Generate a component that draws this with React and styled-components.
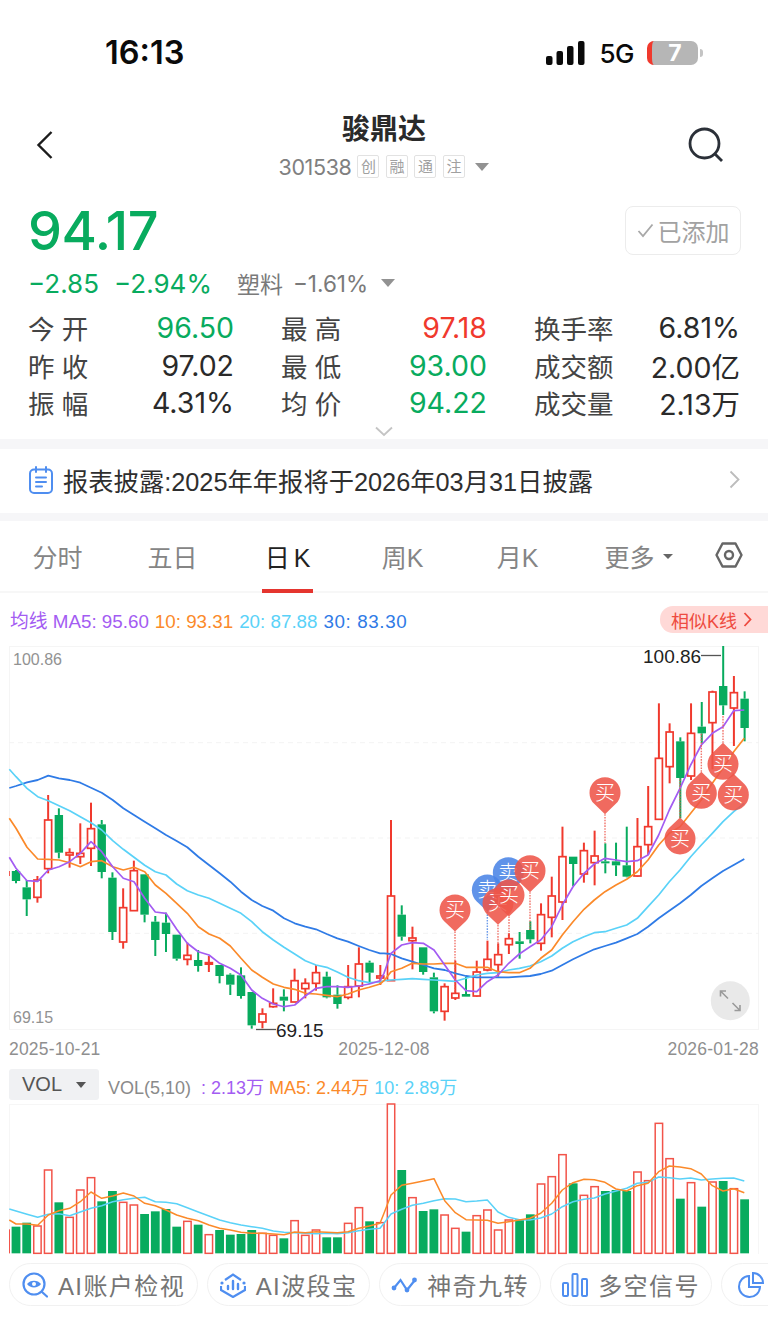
import React from 'react';
import styled, { createGlobalStyle } from 'styled-components';

const GREEN = '#08AB5E';
const RED = '#F0392D';
const BLUE = '#4F8EF0';
const PURPLE = '#A35CF2';
const ORANGE = '#FB8A2A';
const CYAN = '#5AD2F8';
const DEEP_BLUE = '#2F7BE6';
const DIGITS = "'Inter', 'Noto Sans CJK SC', sans-serif";

const Global = createGlobalStyle`
  html, body {
    margin: 0;
    padding: 0;
    background: #fff;
  }
  body {
    font-family: 'Liberation Sans', 'Noto Sans CJK SC', sans-serif;
  }
  * {
    box-sizing: border-box;
  }
`;

const Page = styled.div`
  width: 768px;
  height: 1317px;
  overflow: hidden;
  background: #fff;
  color: #222;
`;

const StatusBar = styled.div`
  height: 98px;
  padding: 36px 65px 0 105px;
  display: flex;
  align-items: flex-start;
  justify-content: space-between;
`;

const Clock = styled.div`
  font-size: 32.5px;
  line-height: 34px;
  font-weight: 600;
  font-family: 'Inter', sans-serif;
  color: #0a0a0a;
`;

const StatusRight = styled.div`
  display: flex;
  align-items: center;
  height: 34px;
`;

const NetLabel = styled.span`
  font-size: 26px;
  font-family: 'Inter', sans-serif;
  font-weight: 500;
  margin: 0 13px 0 14px;
  letter-spacing: -0.5px;
  color: #0a0a0a;
`;

const Battery = styled.div`
  width: 51px;
  height: 24px;
  border-radius: 7px;
  border-left: 5px solid #F0392D;
  background: #B6B6B6;
  color: #fff;
  font-size: 23px;
  font-weight: 700;
  line-height: 24px;
  text-align: center;
  font-family: 'Inter', sans-serif;
`;

const BatteryCap = styled.div`
  width: 3px;
  height: 8px;
  margin-left: 2px;
  border-radius: 0 3px 3px 0;
  background: #C4C4C4;
`;

const Header = styled.div`
  height: 100px;
  padding: 0 44px 6px 36px;
  display: flex;
  align-items: center;
  justify-content: space-between;
`;

const HeaderSide = styled.div`
  width: ${(p) => (p.$right ? 40 : 48)}px;
  display: flex;
  justify-content: ${(p) => (p.$right ? 'flex-end' : 'flex-start')};
`;

const HeaderCenter = styled.div`
  display: flex;
  flex-direction: column;
  align-items: center;
  margin-top: -1px;
`;

const Title = styled.div`
  font-size: 28px;
  line-height: 38px;
  font-weight: 700;
  color: #2a2a2a;
`;

const SubRow = styled.div`
  display: flex;
  align-items: center;
  margin-top: 6px;
  height: 24px;
  color: #808080;
`;

const Code = styled.span`
  font-size: 21.5px;
  margin-right: 6px;
  font-family: ${DIGITS};
  letter-spacing: -0.4px;
`;

const Tag = styled.span`
  width: 22px;
  height: 23px;
  margin-right: 6.5px;
  border: 1px solid #e2e2e2;
  border-radius: 2px;
  color: #a0a0a0;
  font-size: 15px;
  line-height: 21px;
  text-align: center;
  display: block;
  overflow: hidden;
`;

const Caret = styled.span`
  display: inline-block;
  width: 0;
  height: 0;
  border-left: ${(p) => p.$size || 7.5}px solid transparent;
  border-right: ${(p) => p.$size || 7.5}px solid transparent;
  border-top: ${(p) => (p.$size || 7.5) * 1.1}px solid ${(p) => p.$color || '#929292'};
  margin-left: ${(p) => p.$gap || 0}px;
`;

const QuoteTop = styled.div`
  display: flex;
  justify-content: space-between;
  padding: 8px 27px 0 28px;
  height: 63px;
`;

const BigPrice = styled.div`
  font-size: 54px;
  line-height: 50px;
  font-weight: 500;
  letter-spacing: -0.5px;
  font-family: ${DIGITS};
  color: ${GREEN};
`;

const AddButton = styled.div`
  width: 116px;
  height: 49px;
  border: 1.5px solid #ececec;
  border-radius: 8px;
  display: flex;
  align-items: center;
  justify-content: center;
  gap: 4px;
  color: #a2a2a2;
  font-size: 24px;
`;

const ChangeRow = styled.div`
  display: flex;
  align-items: center;
  height: 32px;
  margin-top: 6px;
  padding-left: 28px;
  font-size: 26px;
  font-family: ${DIGITS};
  color: ${GREEN};
`;

const ChangeValue = styled.span`
  margin-right: ${(p) => p.$gap}px;
`;

const Sector = styled.span`
  color: #7a7a7a;
  font-size: ${(p) => p.$size}px;
  margin-right: ${(p) => p.$gap}px;
`;

const StatGrid = styled.div`
  display: grid;
  grid-template-columns: repeat(3, 206px);
  column-gap: 47px;
  grid-auto-rows: 37.5px;
  padding: 10px 0 0 28px;
  height: 127px;
`;

const Stat = styled.div`
  display: flex;
  align-items: center;
  justify-content: space-between;
  font-size: 26.5px;
`;

const StatLabel = styled.span`
  color: #444;
`;

const StatValue = styled.span`
  font-size: 28.5px;
  font-family: ${DIGITS};
  color: ${(p) => p.$color || '#2a2a2a'};
`;

const Expand = styled.div`
  height: 13px;
  display: flex;
  justify-content: center;
`;

const Divider = styled.div`
  height: ${(p) => p.$h}px;
  background: #f6f6f8;
`;

const Notice = styled.div`
  height: 64px;
  display: flex;
  align-items: center;
  padding: 0 28px 3px 29px;
  font-size: 25.3px;
  color: #2e2e2e;
`;

const NoticeText = styled.span`
  flex: 1;
  margin-left: 10px;
`;

const Tabs = styled.div`
  height: 72px;
  display: flex;
  align-items: stretch;
  border-bottom: 2px solid #f7f7f7;
`;

const Tab = styled.div`
  width: 115px;
  position: relative;
  display: flex;
  align-items: center;
  justify-content: center;
  padding-left: ${(p) => p.$pad || 0}px;
  font-size: 25px;
  color: ${(p) => (p.$active ? '#222' : '#858585')};
  word-spacing: ${(p) => (p.$active ? -3 : 0)}px;

  ${(p) =>
    p.$active &&
    `&::after {
      content: '';
      position: absolute;
      left: 32px;
      bottom: -2px;
      width: 51px;
      height: 4px;
      background: #E5352F;
    }`}
`;

const TabIcon = styled.div`
  flex: 1;
  display: flex;
  align-items: center;
  padding: 0 0 2px 25px;
`;

const MaRow = styled.div`
  height: 53px;
  display: flex;
  align-items: center;
  justify-content: space-between;
  padding-left: 10px;
  font-size: 18.8px;
`;

const MaValues = styled.div`
  display: flex;
  align-items: baseline;
  gap: 6px;
`;

const MaText = styled.span`
  color: ${(p) => p.$color};
  letter-spacing: ${(p) => p.$spacing || 0}px;
`;

const SimilarPill = styled.div`
  width: 108px;
  height: 27px;
  padding-left: 11px;
  border-radius: 13px 0 0 13px;
  background: #FFD9D7;
  color: #EE4B40;
  font-size: 18px;
  display: flex;
  align-items: center;
  gap: 6px;
`;

const ChartBox = styled.div`
  width: 750px;
  height: 384px;
  margin-left: 9px;
  border: 1px solid #f5f5f5;
  position: relative;
`;

const ChartSvg = styled.svg`
  position: absolute;
  left: -1px;
  top: -1px;
  overflow: visible;
  display: block;
`;

const DateRow = styled.div`
  width: 750px;
  height: 39px;
  margin-left: 9px;
  display: flex;
  align-items: center;
  justify-content: space-between;
  font-size: 17.5px;
  color: #8f8f8f;
  letter-spacing: 0.2px;
`;

const VolRow = styled.div`
  height: 35px;
  display: flex;
  align-items: flex-start;
  padding-left: 9px;
  font-size: 18px;
`;

const VolButton = styled.div`
  width: 90px;
  height: 31px;
  background: #f0f1f3;
  border-radius: 3px;
  display: flex;
  align-items: center;
  justify-content: center;
  gap: 14px;
  color: #555;
  font-size: 20px;
  margin-right: 9px;
`;

const VolValues = styled.div`
  display: flex;
  align-items: baseline;
  height: 31px;
  padding-top: 4px;
  gap: 5px;
`;

const VolBox = styled.div`
  width: 750px;
  height: 150px;
  margin-left: 9px;
  border: 1px solid #f6f6f6;
  border-bottom: 0;
  position: relative;
`;

const ChipRow = styled.div`
  display: flex;
  gap: 9px;
  padding: 9px 0 0 9px;
  overflow: hidden;
`;

const Chip = styled.div`
  flex: 0 0 ${(p) => p.$w}px;
  height: 43px;
  border: 1.5px solid #f1f1f1;
  border-radius: 22px;
  display: flex;
  align-items: center;
  justify-content: ${(p) => (p.$iconOnly ? 'flex-start' : 'center')};
  padding-left: ${(p) => (p.$iconOnly ? 16 : 0)}px;
  gap: 10px;
  color: #757575;
  font-size: 24px;
  letter-spacing: 1.4px;
`;

// chart coordinates were read off 3x crops: l = left half, r = right half
const lx = (z) => z / 3;
const rx = (z) => 384 + z / 3;
const cx = (i) => 16 + i * 10.715;
const cy = (z) => 640 + z / 3;
const vy = (z) => 1040 + z / 3;

const toPath = (left, right, fy) =>
  [...left.map(([x, y]) => [lx(x), fy(y)]), ...right.map(([x, y]) => [rx(x), fy(y)])]
    .map(([x, y]) => `${x.toFixed(1)},${y.toFixed(1)}`)
    .join(' ');

// g/r, wick top, body top, body bottom, wick bottom
const candles = [
  ['g', 690, 693, 723, 730], ['g', 720, 742, 778, 828], ['r', 708, 720, 772, 788], ['r', 465, 540, 686, 700],
  ['g', 505, 525, 638, 655], ['r', 625, 638, 645, 683], ['r', 550, 640, 650, 672], ['r', 488, 566, 625, 678],
  ['g', 540, 553, 696, 715], ['g', 697, 713, 876, 900], ['r', 745, 803, 906, 926], ['r', 662, 692, 812, 812],
  ['g', 703, 703, 824, 847], ['g', 828, 845, 900, 948], ['g', 818, 848, 882, 936], ['g', 884, 884, 956, 962],
  ['r', 908, 946, 958, 976], ['g', 930, 960, 978, 995], ['r', 948, 968, 972, 996], ['g', 975, 975, 1008, 1030],
  ['g', 1000, 1004, 1034, 1065], ['g', 982, 1006, 1068, 1076], ['g', 1056, 1056, 1156, 1166], ['r', 1105, 1122, 1146, 1165],
  ['r', 1045, 1090, 1100, 1103], ['g', 1048, 1070, 1082, 1114], ['r', 986, 1022, 1086, 1086], ['r', 1015, 1030, 1046, 1075],
  ['r', 975, 998, 1030, 1052], ['g', 995, 1010, 1072, 1075], ['g', 1036, 1064, 1092, 1106], ['r', 975, 1040, 1072, 1078],
  ['r', 922, 972, 1038, 1072], ['g', 962, 968, 998, 1032], ['r', 975, 1008, 1014, 1035], ['r', 540, 768, 1022, 1022],
  ['g', 796, 824, 890, 902], ['r', 860, 894, 902, 988], ['g', 922, 922, 996, 1004], ['g', 998, 1012, 1114, 1120],
  ['r', 1030, 1040, 1114, 1142], ['r', 962, 1060, 1074, 1080], ['g', 1010, 1062, 1070, 1070], ['r', 962, 996, 1068, 1070],
  ['r', 902, 958, 990, 994], ['r', 910, 944, 974, 1010], ['r', 880, 896, 914, 942], ['g', 876, 904, 912, 956],
  ['g', 844, 870, 898, 910], ['r', 790, 824, 910, 932], ['r', 710, 768, 832, 892], ['r', 560, 650, 786, 840],
  ['g', 650, 650, 672, 738], ['r', 608, 632, 702, 728], ['r', 572, 648, 668, 736], ['g', 610, 664, 670, 700],
  ['g', 608, 664, 676, 708], ['g', 560, 676, 710, 712], ['r', 534, 620, 708, 710], ['r', 438, 560, 614, 645],
  ['r', 190, 355, 538, 538], ['r', 250, 276, 380, 430], ['g', 292, 304, 414, 535], ['r', 190, 280, 408, 420],
  ['g', 186, 260, 280, 310], ['r', 152, 156, 248, 388], ['g', 18, 138, 196, 225], ['r', 108, 158, 204, 318],
  ['g', 154, 176, 264, 304],
];

const ma5 = toPath(
  [[28,652],[48,685],[81,722],[113,724],[145,690],[177,680],[209,665],[241,640],[273,605],[305,635],[338,680],[370,715],[402,725],[434,775],[466,816],[498,820],[530,868],[562,910],[595,935],[627,945],[659,970],[691,985],[723,1005],[755,1050],[787,1075],[820,1092],[852,1100],[884,1095],[916,1068],[948,1045],[980,1040],[1012,1040],[1044,1042],[1076,1038],[1108,1032],[1140,1022]],
  [[0,1000],[21,940],[53,915],[85,908],[118,910],[150,930],[182,975],[214,1020],[246,1052],[278,1055],[310,1025],[342,1005],[374,970],[406,942],[438,920],[470,900],[503,860],[535,795],[567,740],[600,700],[631,672],[663,655],[696,660],[728,665],[760,662],[792,645],[824,585],[856,510],[888,445],[920,375],[952,315],[985,280],[1017,260],[1049,212],[1081,210]],
  cy
);
const ma10 = toPath(
  [[28,535],[48,565],[81,622],[113,657],[145,658],[177,660],[209,668],[241,680],[273,665],[305,662],[338,680],[370,690],[402,682],[434,695],[466,735],[498,760],[530,790],[562,820],[595,860],[627,882],[659,895],[691,918],[723,955],[755,990],[787,1012],[820,1032],[852,1042],[884,1048],[916,1060],[948,1062],[980,1066],[1012,1070],[1044,1062],[1076,1050],[1108,1042],[1140,1032]],
  [[0,1022],[21,995],[53,985],[85,970],[118,972],[150,972],[182,970],[214,970],[246,982],[278,982],[310,982],[342,995],[374,998],[406,998],[438,985],[470,955],[503,930],[535,885],[567,845],[600,808],[631,780],[663,755],[696,735],[728,718],[760,695],[792,660],[824,615],[856,580],[888,560],[920,520],[952,480],[985,430],[1017,385],[1049,335],[1081,295]],
  cy
);
const ma20 = toPath(
  [[28,388],[48,410],[81,445],[113,470],[145,482],[177,497],[209,512],[241,530],[273,548],[305,570],[338,602],[370,628],[402,652],[434,676],[466,695],[498,705],[530,732],[562,752],[595,765],[627,775],[659,790],[691,805],[723,820],[755,845],[787,875],[820,900],[852,922],[884,942],[916,962],[948,975],[980,982],[1012,996],[1044,1012],[1076,1022],[1108,1028],[1140,1026]],
  [[0,1022],[21,1020],[53,1018],[85,1016],[118,1018],[150,1020],[182,1022],[214,1024],[246,1015],[278,1005],[310,1000],[342,998],[374,990],[406,985],[438,978],[470,965],[503,948],[535,925],[567,905],[600,890],[631,878],[663,875],[696,865],[728,855],[760,835],[792,800],[824,765],[856,725],[888,690],[920,650],[952,615],[985,580],[1017,545],[1049,515],[1081,490]],
  cy
);
const ma30 = toPath(
  [[28,444],[48,438],[81,427],[113,420],[145,407],[177,415],[209,420],[241,428],[273,443],[305,458],[338,480],[370,505],[402,525],[434,545],[466,565],[498,585],[530,603],[562,622],[595,650],[627,675],[659,700],[691,725],[723,755],[755,780],[787,798],[820,812],[852,835],[884,850],[916,860],[948,868],[980,882],[1012,895],[1044,905],[1076,918],[1108,930],[1140,940]],
  [[0,940],[21,942],[53,955],[85,965],[118,975],[150,985],[182,990],[214,1000],[246,1008],[278,1012],[310,1012],[342,1012],[374,1012],[406,1010],[438,1008],[470,1002],[503,992],[535,975],[567,958],[600,942],[631,928],[663,918],[696,908],[728,895],[760,882],[792,860],[824,835],[856,812],[888,790],[920,765],[952,738],[985,715],[1017,693],[1049,675],[1081,657]],
  cy
);

const volumes = [
  ['g',560],['g',548],['r',558],['r',390],['g',487],['r',532],['r',450],['r',413],['g',484],['g',453],['r',487],['r',495],
  ['g',522],['g',514],['g',507],['g',560],['r',544],['g',554],['r',584],['g',570],['g',584],['g',582],['g',570],['r',580],
  ['r',586],['g',595],['r',542],['r',586],['r',570],['g',592],['g',592],['r',550],['r',503],['g',544],['r',548],['r',192],
  ['g',390],['r',473],['g',513],['g',508],['r',525],['r',565],['g',575],['r',527],['r',510],['r',570],['r',540],['g',538],
  ['g',523],['r',432],['r',410],['r',344],['g',430],['r',466],['r',440],['g',453],['g',450],['g',453],['r',396],['r',422],
  ['r',250],['r',356],['g',476],['r',428],['g',500],['r',426],['g',423],['r',446],['g',478],
];

const volMa5 = toPath(
  [[28,540],[48,552],[81,552],[113,556],[145,525],[177,512],[209,505],[241,485],[273,456],[305,475],[338,468],[370,459],[402,468],[434,490],[466,497],[498,510],[530,525],[562,535],[595,542],[627,555],[659,565],[691,570],[723,577],[755,580],[787,580],[820,582],[852,584],[884,576],[916,578],[948,575],[980,577],[1012,578],[1044,575],[1076,565],[1108,558],[1140,550]],
  [[0,520],[21,465],[53,436],[85,430],[118,423],[150,416],[182,482],[214,518],[246,539],[278,540],[310,541],[342,550],[374,545],[406,540],[438,535],[470,520],[503,490],[535,450],[567,428],[600,418],[631,419],[663,427],[696,447],[728,453],[760,437],[792,430],[824,395],[856,378],[888,381],[920,386],[952,402],[985,437],[1017,453],[1049,446],[1081,458]],
  vy
);
const volMa10 = toPath(
  [[28,507],[48,513],[81,523],[113,532],[145,523],[177,521],[209,527],[241,516],[273,505],[305,497],[338,485],[370,479],[402,475],[434,472],[466,485],[498,487],[530,491],[562,503],[595,516],[627,528],[659,540],[691,548],[723,555],[755,560],[787,565],[820,573],[852,577],[884,578],[916,580],[948,581],[980,580],[1012,581],[1044,578],[1076,572],[1108,568],[1140,565]],
  [[0,550],[21,522],[53,508],[85,496],[118,490],[150,482],[182,476],[214,477],[246,485],[278,483],[310,480],[342,516],[374,532],[406,539],[438,540],[470,534],[503,522],[535,500],[567,485],[600,478],[631,474],[663,462],[696,453],[728,445],[760,430],[792,427],[824,411],[856,413],[888,417],[920,414],[952,420],[985,417],[1017,415],[1049,414],[1081,423]],
  vy
);

// kind, circle x, circle y, pointing up?, end of the dotted stem
const pins = [
  ['s', 310, 750, false, 900],
  ['s', 373, 698, false, 760],
  ['b', 213, 810, false, 1060],
  ['b', 342, 790, false, 945],
  ['b', 375, 765, false, 895],
  ['b', 438, 692, false, 870],
  ['b', 663, 458, false, 610],
  ['b', 888, 597, true, 414],
  ['b', 952, 460, true, 280],
  ['b', 1017, 373, true, 225],
  ['b', 1048, 465, true, 403],
];

function Pin({ kind, zx, zy, up, stem }) {
  const x = rx(zx);
  const y = cy(zy);
  const dir = up ? -1 : 1;
  const color = kind === 'b' ? '#EE5549' : '#4A84E6';
  const tip = y + dir * 21.5;
  const side = y + dir * 11.2;
  return (
    <g>
      <line x1={x} y1={tip} x2={x} y2={cy(stem)} stroke={color} strokeWidth="1.4" strokeDasharray="1.6 1.2" opacity="0.8" />
      <path
        d={`M${x} ${tip}L${x - 10.8} ${side}A15.5 15.5 0 1 ${up ? 0 : 1} ${x + 10.8} ${side}Z`}
        fill={color}
        fillOpacity="0.88"
      />
      <text x={x} y={y + 7} fontSize="20" fontWeight="300" fill="#fff" textAnchor="middle" fontFamily="'Noto Sans CJK SC', sans-serif">
        {kind === 'b' ? '买' : '卖'}
      </text>
    </g>
  );
}

function KChart() {
  return (
    <ChartSvg width="750" height="384" viewBox="9 646 750 384">
      {[742.7, 838, 933.3].map((y) => (
        <line key={y} x1="9" x2="759" y1={y} y2={y} stroke="#f3f3f3" strokeDasharray="5 4" />
      ))}
      <rect x="9" y={cy(693)} width="0.8" height="5" fill={RED} />
      {candles.map(([c, wt, bt, bb, wb], i) => {
        const x = cx(i);
        const col = c === 'g' ? GREEN : RED;
        return (
          <g key={i}>
            <line x1={x} x2={x} y1={cy(wt)} y2={cy(bt)} stroke={col} strokeWidth="2" />
            <line x1={x} x2={x} y1={cy(bb)} y2={cy(wb)} stroke={col} strokeWidth="2" />
            {c === 'g' ? (
              <rect x={x - 4.2} y={cy(bt)} width="8.4" height={Math.max((bb - bt) / 3, 2)} fill={col} />
            ) : (
              <rect x={x - 3.5} y={cy(bt)} width="7" height={Math.max((bb - bt) / 3, 1.5)} fill="#fff" stroke={col} strokeWidth="1.7" />
            )}
          </g>
        );
      })}
      <polyline points={ma30} fill="none" stroke={DEEP_BLUE} strokeWidth="1.8" strokeLinejoin="round" />
      <polyline points={ma20} fill="none" stroke={CYAN} strokeWidth="1.7" strokeLinejoin="round" />
      <polyline points={ma10} fill="none" stroke={ORANGE} strokeWidth="1.7" strokeLinejoin="round" />
      <polyline points={ma5} fill="none" stroke={PURPLE} strokeWidth="1.7" strokeLinejoin="round" />
      {pins.map(([k, x, y, up, stem]) => (
        <Pin key={`${x}-${y}`} kind={k} zx={x} zy={y} up={up} stem={stem} />
      ))}
      <text x="13" y="665" fontSize="16" fill="#929292">100.86</text>
      <text x="13" y="1023" fontSize="16" fill="#929292">69.15</text>
      <text x="643" y="663" fontSize="19" fill="#222">100.86</text>
      <line x1="701" x2="721" y1="655.5" y2="655.5" stroke="#555" strokeWidth="1.3" />
      <line x1="256" x2="276" y1="1029.5" y2="1029.5" stroke="#555" strokeWidth="1.3" />
      <text x="276" y="1037" fontSize="19" fill="#222">69.15</text>
      <circle cx="730.3" cy="1000.7" r="19.5" fill="#e9e9e9" />
      <path
        d="M720.5 996.5V991h5.5M720.5 991l7.5 7.5M740 1005v5.5h-5.5M740 1010.5l-7.5-7.5"
        fill="none"
        stroke="#9a9a9a"
        strokeWidth="1.6"
      />
    </ChartSvg>
  );
}

function VolChart() {
  return (
    <ChartSvg width="750" height="150" viewBox="9 1104 750 150">
      <rect x="9" y={vy(568)} width="1" height={vy(640) - vy(568)} fill="#F2544A" />
      {volumes.map(([c, top], i) => {
        const x = cx(i);
        return c === 'g' ? (
          <rect key={i} x={x - 4.4} y={vy(top)} width="8.8" height={(640 - top) / 3} fill={GREEN} />
        ) : (
          <rect key={i} x={x - 3.7} y={vy(top)} width="7.4" height={(640 - top) / 3} fill="#fff" stroke="#F2544A" strokeWidth="1.5" />
        );
      })}
      <polyline points={volMa10} fill="none" stroke={CYAN} strokeWidth="1.5" strokeLinejoin="round" />
      <polyline points={volMa5} fill="none" stroke={ORANGE} strokeWidth="1.5" strokeLinejoin="round" />
    </ChartSvg>
  );
}

const SignalIcon = () => (
  <svg width="39" height="24" viewBox="0 0 39 24">
    <rect x="0" y="15" width="6.5" height="9" rx="2" fill="#0a0a0a" />
    <rect x="10.5" y="10" width="6.5" height="14" rx="2" fill="#0a0a0a" />
    <rect x="21" y="5" width="6.5" height="19" rx="2" fill="#0a0a0a" />
    <rect x="32" y="0" width="6.5" height="24" rx="2" fill="#0a0a0a" />
  </svg>
);

const BackIcon = () => (
  <svg width="18" height="30" viewBox="0 0 18 30">
    <path d="M15.5 2L2.5 15l13 13" fill="none" stroke="#1c1c1c" strokeWidth="2.4" />
  </svg>
);

const SearchIcon = () => (
  <svg width="36" height="36" viewBox="0 0 36 36">
    <circle cx="16.5" cy="16.5" r="14.5" fill="none" stroke="#2b3038" strokeWidth="2.8" />
    <path d="M27 27l7 7" stroke="#2b3038" strokeWidth="2.8" />
  </svg>
);

const CheckIcon = () => (
  <svg width="17" height="15" viewBox="0 0 17 15">
    <path d="M1.5 8l4.5 5L15.5 1.5" fill="none" stroke="#a8a8a8" strokeWidth="1.8" />
  </svg>
);

const ChevronDown = () => (
  <svg width="18" height="11" viewBox="0 0 18 11">
    <path d="M1 1.5l8 7.5 8-7.5" fill="none" stroke="#c4c4c4" strokeWidth="1.8" />
  </svg>
);

const NoteIcon = () => (
  <svg width="24" height="28" viewBox="0 0 24 28">
    <rect x="1" y="3.5" width="22" height="23.5" rx="4" fill="none" stroke={BLUE} strokeWidth="2" />
    <path d="M7 1v5M17 1v5" stroke={BLUE} strokeWidth="2" strokeLinecap="round" />
    <path d="M7 11.5h10M7 16h10M7 20.5h6" stroke={BLUE} strokeWidth="2" strokeLinecap="round" />
  </svg>
);

const ChevronRight = () => (
  <svg width="11" height="19" viewBox="0 0 11 19">
    <path d="M1.5 1.5l8 8-8 8" fill="none" stroke="#bcbcbc" strokeWidth="1.8" />
  </svg>
);

const SettingsIcon = () => (
  <svg width="28" height="26" viewBox="0 0 28 26">
    <path d="M7.5 1.5h13L26.5 13l-6 11.5h-13L1.5 13z" fill="none" stroke="#666" strokeWidth="2.4" strokeLinejoin="round" />
    <circle cx="14" cy="13" r="4" fill="none" stroke="#666" strokeWidth="2.4" />
  </svg>
);

const PillArrow = () => (
  <svg width="9" height="15" viewBox="0 0 9 15">
    <path d="M1.5 1l6 6.5-6 6.5" fill="none" stroke="#EE4B40" strokeWidth="1.8" />
  </svg>
);

const EyeIcon = () => (
  <svg width="26" height="26" viewBox="0 0 26 26">
    <circle cx="12" cy="12" r="10.5" fill="none" stroke={BLUE} strokeWidth="2.2" />
    <path d="M5 12c3-4.5 11-4.5 14 0-3 4.5-11 4.5-14 0z" fill={BLUE} />
    <circle cx="12" cy="12" r="2" fill="#fff" />
    <path d="M20 20l5 4.5" stroke={BLUE} strokeWidth="2.2" strokeLinecap="round" />
  </svg>
);

const WaveIcon = () => (
  <svg width="26" height="26" viewBox="0 0 26 26">
    <path d="M5 8l8-5.5L21 8M25 14v4l-12 7-12-7v-4" fill="none" stroke={BLUE} strokeWidth="2.2" />
    <path d="M8 17v-3M13 17V9M18 17v-5" stroke={BLUE} strokeWidth="2.4" strokeLinecap="round" />
    <circle cx="2" cy="11" r="1.6" fill={BLUE} />
    <circle cx="24" cy="11" r="1.6" fill={BLUE} />
  </svg>
);

const TrendIcon = () => (
  <svg width="26" height="20" viewBox="0 0 26 20">
    <path d="M3 13L9.5 5 16 15 24 5" fill="none" stroke={BLUE} strokeWidth="2.2" />
    <circle cx="3" cy="13" r="2.4" fill={BLUE} />
    <circle cx="16" cy="15" r="2.4" fill={BLUE} />
    <circle cx="23.5" cy="5" r="2.4" fill={BLUE} />
  </svg>
);

const BarsIcon = () => (
  <svg width="26" height="24" viewBox="0 0 26 24">
    <rect x="1" y="10" width="5" height="13" rx="1" fill="none" stroke={BLUE} strokeWidth="2" />
    <rect x="10.5" y="1" width="5" height="22" rx="1" fill="none" stroke={BLUE} strokeWidth="2" />
    <rect x="20" y="6" width="5" height="17" rx="1" fill="none" stroke={BLUE} strokeWidth="2" />
  </svg>
);

const PieIcon = () => (
  <svg width="26" height="26" viewBox="0 0 26 26">
    <path d="M11 4a10.5 10.5 0 1 0 11 11H11z" fill="none" stroke={BLUE} strokeWidth="2" />
    <path d="M15 1a10 10 0 0 1 10 10H15z" fill="none" stroke={BLUE} strokeWidth="2" />
  </svg>
);

const stats = [
  ['今 开', '96.50', GREEN],
  ['最 高', '97.18', RED],
  ['换手率', '6.81%'],
  ['昨 收', '97.02'],
  ['最 低', '93.00', GREEN],
  ['成交额', '2.00亿'],
  ['振 幅', '4.31%'],
  ['均 价', '94.22', GREEN],
  ['成交量', '2.13万'],
];

export default function App() {
  return (
    <Page>
      <Global />
      <StatusBar>
        <Clock>16:13</Clock>
        <StatusRight>
          <SignalIcon />
          <NetLabel>5G</NetLabel>
          <Battery>7</Battery>
          <BatteryCap />
        </StatusRight>
      </StatusBar>
      <Header>
        <HeaderSide>
          <BackIcon />
        </HeaderSide>
        <HeaderCenter>
          <Title>骏鼎达</Title>
          <SubRow>
            <Code>301538</Code>
            <Tag>创</Tag>
            <Tag>融</Tag>
            <Tag>通</Tag>
            <Tag>注</Tag>
            <Caret $gap={4} />
          </SubRow>
        </HeaderCenter>
        <HeaderSide $right>
          <SearchIcon />
        </HeaderSide>
      </Header>
      <QuoteTop>
        <BigPrice>94.17</BigPrice>
        <AddButton>
          <CheckIcon />
          已添加
        </AddButton>
      </QuoteTop>
      <ChangeRow>
        <ChangeValue $gap={15}>−2.85</ChangeValue>
        <ChangeValue $gap={25}>−2.94%</ChangeValue>
        <Sector $size={23} $gap={10}>塑料</Sector>
        <Sector $size={22.5} $gap={0}>−1.61%</Sector>
        <Caret $gap={13} />
      </ChangeRow>
      <StatGrid>
        {stats.map(([label, value, color]) => (
          <Stat key={label}>
            <StatLabel>{label}</StatLabel>
            <StatValue $color={color}>{value}</StatValue>
          </Stat>
        ))}
      </StatGrid>
      <Expand>
        <ChevronDown />
      </Expand>
      <Divider $h={10} />
      <Notice>
        <NoteIcon />
        <NoticeText>报表披露:2025年年报将于2026年03月31日披露</NoticeText>
        <ChevronRight />
      </Notice>
      <Divider $h={8} />
      <Tabs>
        <Tab>分时</Tab>
        <Tab>五日</Tab>
        <Tab $active>日 K</Tab>
        <Tab>周K</Tab>
        <Tab>月K</Tab>
        <Tab $pad={12}>
          更多
          <Caret $size={5} $color="#666" $gap={8} />
        </Tab>
        <TabIcon>
          <SettingsIcon />
        </TabIcon>
      </Tabs>
      <MaRow>
        <MaValues>
          <MaText $color={PURPLE}>均线 MA5: 95.60</MaText>
          <MaText $color={ORANGE}>10: 93.31</MaText>
          <MaText $color={CYAN}>20: 87.88</MaText>
          <MaText $color={DEEP_BLUE} $spacing={0.6}>30: 83.30</MaText>
        </MaValues>
        <SimilarPill>
          相似K线
          <PillArrow />
        </SimilarPill>
      </MaRow>
      <ChartBox>
        <KChart />
      </ChartBox>
      <DateRow>
        <span>2025-10-21</span>
        <span>2025-12-08</span>
        <span>2026-01-28</span>
      </DateRow>
      <VolRow>
        <VolButton>
          VOL
          <Caret $size={5.5} $color="#555" />
        </VolButton>
        <VolValues>
          <MaText $color="#8a8a8a">VOL(5,10)</MaText>
          <MaText $color={PURPLE}>&nbsp;: 2.13万</MaText>
          <MaText $color={ORANGE}>MA5: 2.44万</MaText>
          <MaText $color={CYAN}>10: 2.89万</MaText>
        </VolValues>
      </VolRow>
      <VolBox>
        <VolChart />
      </VolBox>
      <ChipRow>
        <Chip $w={189}><EyeIcon />AI账户检视</Chip>
        <Chip $w={163}><WaveIcon />AI波段宝</Chip>
        <Chip $w={162}><TrendIcon />神奇九转</Chip>
        <Chip $w={162}><BarsIcon />多空信号</Chip>
        <Chip $w={162} $iconOnly><PieIcon /></Chip>
      </ChipRow>
    </Page>
  );
}
